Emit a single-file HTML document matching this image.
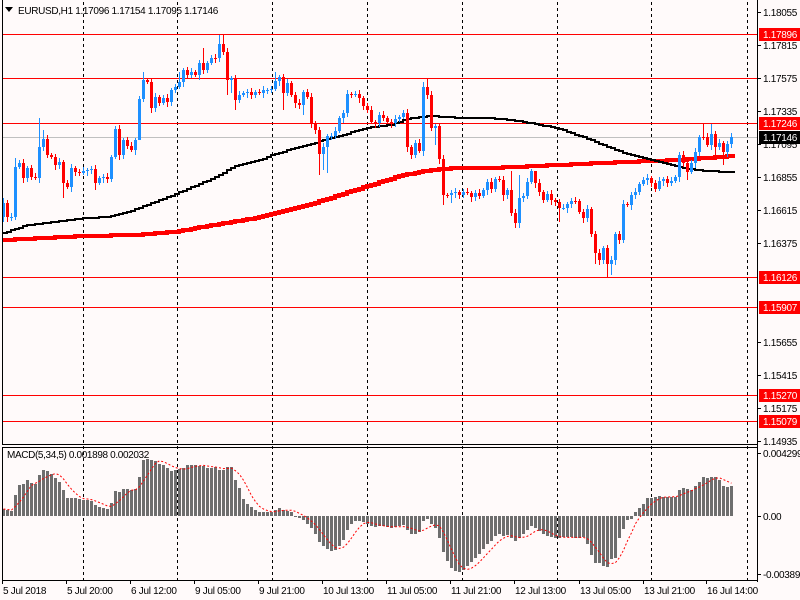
<!DOCTYPE html>
<html><head><meta charset="utf-8"><style>
html,body{margin:0;padding:0;background:#fffafa;}
svg{display:block;}
text{font-family:"Liberation Sans",sans-serif;font-size:10px;fill:#000;letter-spacing:-0.3px;}
</style></head><body>
<svg id="s" width="800" height="600" xmlns="http://www.w3.org/2000/svg">
<rect width="800" height="600" fill="#fffafa"/>
<g id="grid" stroke="#000" stroke-width="1" stroke-dasharray="3,3">
<line x1="83.5" y1="2" x2="83.5" y2="580"/><line x1="177.5" y1="2" x2="177.5" y2="580"/>
<line x1="272.5" y1="2" x2="272.5" y2="580"/><line x1="367.5" y1="2" x2="367.5" y2="580"/>
<line x1="462.5" y1="2" x2="462.5" y2="580"/><line x1="557.5" y1="2" x2="557.5" y2="580"/>
<line x1="651.5" y1="2" x2="651.5" y2="580"/><line x1="747.5" y1="2" x2="747.5" y2="580"/>
</g>
<g stroke="#ff0000" stroke-width="1">
<line x1="2" y1="34.5" x2="757" y2="34.5"/><line x1="2" y1="78.5" x2="757" y2="78.5"/>
<line x1="2" y1="123.5" x2="757" y2="123.5"/><line x1="2" y1="277.5" x2="757" y2="277.5"/>
<line x1="2" y1="307.5" x2="757" y2="307.5"/><line x1="2" y1="395.5" x2="757" y2="395.5"/>
<line x1="2" y1="421.5" x2="757" y2="421.5"/>
</g>
<line x1="2" y1="137.5" x2="757" y2="137.5" stroke="#c0c0c0"/>
<g id="dyn"></g>
<g stroke="#000" fill="none">
<line x1="2.5" y1="0" x2="2.5" y2="444"/><line x1="757.5" y1="0" x2="757.5" y2="582"/>
<line x1="2" y1="444.5" x2="757" y2="444.5"/><line x1="2" y1="447.5" x2="757" y2="447.5"/>
<line x1="2.5" y1="447" x2="2.5" y2="580"/><line x1="2" y1="580.5" x2="757" y2="580.5"/>
</g>
<path d="M5 7 L13 7 L9 12 Z" fill="#000"/>
<text x="18" y="14" textLength="200">EURUSD,H1  1.17096 1.17154 1.17095 1.17146</text>
<text x="7" y="458" textLength="142">MACD(5,34,5) 0.001898 0.002032</text>
<g id="ax"></g>
</svg>
<script>
(function(){
var C=[203,217,217,167,163,178,168,177,178,147,139,155,157,165,162,183,187,168,172,173,171,170,169,183,178,177,179,157,129,155,140,146,150,140,99,80,82,108,97,103,98,102,90,87,82,70,75,72,75,63,70,63,58,58,44,52,80,78,100,95,93,92,95,92,93,90,90,89,81,77,93,83,95,103,105,92,97,123,130,154,147,136,136,131,118,113,94,95,94,98,106,110,122,123,115,118,122,123,119,117,113,147,155,143,151,87,95,128,126,159,195,195,193,192,195,192,193,197,193,196,190,182,189,179,180,195,190,213,223,198,196,182,171,183,192,200,194,200,202,208,208,204,201,201,212,218,209,234,253,260,248,264,260,234,240,204,205,195,192,184,180,178,183,189,181,179,183,181,177,155,163,172,163,152,137,137,145,134,147,143,152,144,137];
var OV={0:[198,222],3:[158,null],9:[118,null],10:[130,null],15:[null,198],23:[null,190],34:[null,118],35:[72,null],44:[72,null],50:[48,null],54:[35,null],55:[35,null],56:[null,95],57:[null,93],58:[null,110],68:[72,null],70:[null,110],75:[null,115],79:[null,175],80:[null,170],81:[null,173],105:[82,null],106:[79,null],108:[null,145],110:[null,205],112:[null,203],125:[null,201],127:[171,null],128:[null,228],129:[175,null],133:[175,null],139:[null,222],148:[null,264],151:[null,277],152:[null,275],171:[null,180],175:[124,null],177:[124,null],178:[null,160],180:[null,165]};
var H=[7,6,5,21,31,32,36,33,32,41,46,45,42,38,34,26,18,18,18,17,16,16,15,11,9,8,7,13,25,24,27,27,26,27,39,56,57,56,55,52,51,48,45,46,47,48,51,51,51,50,50,48,48,49,46,46,49,49,36,28,17,12,9,6,4,4,4,4,6,8,6,5,4,0,-2,
-4,-8,-12,-18,-26,-30,-33,-35,-34,-30,-24,-14,-8,-5,-5,-6,-8,-10,-11,-10,-10,-11,-12,-11,-10,-9,-14,-18,-18,-16,-5,-3,-8,-12,-22,-36,-45,-52,-55,-56,-54,-50,-46,-42,-38,-33,-28,-25,-20,-18,-20,-19,-22,-25,-22,-18,-14,-10,-12,-15,-18,-20,-21,
-22,-22,-21,-21,-21,-22,-22,-21,-28,-39,-47,-47,-50,-51,-43,-42,-22,-13,-4,-3,
4,8,12,18,18,19,20,19,19,19,19,26,28,27,26,30,34,39,38,39,39,36,30,29,30];
var s='';
function interp(pts,x){for(var k=0;k<pts.length-1;k++){if(x<=pts[k+1][0]){var a=pts[k],b=pts[k+1];return a[1]+(b[1]-a[1])*(x-a[0])/(b[0]-a[0]);}}return pts[pts.length-1][1];}
var BK=[[3,233],[27,225],[83,218],[107,217],[133,210],[173,195],[213,178],[233,167],[260,160],[271,155],[317,142],[367,128],[390,125],[410,118],[430,116],[463,118],[490,118],[510,120],[530,123],[560,129],[590,140],[623,153],[650,160],[677,167],[703,171],[732,172]];
var RD=[[3,240],[83,236],[133,235],[173,232],[213,225],[260,217],[271,214],[317,202],[367,186],[403,175],[430,170],[457,168],[490,168],[557,165],[623,162],[677,160],[732,156]];
function stepLine(pts,col,w){var d='';for(var x=3;x<=733;x+=4){var y=Math.round(interp(pts,x));d+=(x==3?'M':'L')+x+' '+y+' L'+(x+4)+' '+y+' ';}return '<path d="'+d+'" stroke="'+col+'" stroke-width="'+w+'" fill="none"/>';}
s+=stepLine(RD,'#ff0000',4);
s+=stepLine(BK,'#000',2);
for(var i=0;i<C.length;i++){
 var o=i?C[i-1]:217,c=C[i];var tp=Math.min(o,c),bt=Math.max(o,c);
 var up=c<o||(c==o&&i%2==0);var col=up?'#1e90ff':'#ff0000';
 var hi=tp-2-(i%3),lo=bt+2+((i*7)%4);
 if(OV[i]){if(OV[i][0]!=null)hi=OV[i][0];if(OV[i][1]!=null)lo=OV[i][1];}
 var x=2+4*i;
 s+='<rect x="'+(x+1)+'" y="'+hi+'" width="1" height="'+(lo-hi)+'" fill="'+col+'"/>';
 s+='<rect x="'+x+'" y="'+tp+'" width="3" height="'+Math.max(1,bt-tp)+'" fill="'+col+'"/>';
}
for(var i=0;i<H.length;i++){var h=H[i];var x=2+4*i;
 if(h>=0)s+='<rect x="'+x+'" y="'+(516-h)+'" width="3" height="'+Math.max(1,h)+'" fill="#6e6e6e"/>';
 else s+='<rect x="'+x+'" y="516" width="3" height="'+(-h)+'" fill="#6e6e6e"/>';}
var d='';for(var i=0;i<H.length;i++){var a=0,n=0;for(var k=Math.max(0,i-4);k<=i;k++){a+=H[k];n++;}d+=(i?'L':'M')+(3.5+4*i)+' '+(516-a/n).toFixed(1)+' ';}
s+='<path d="'+d+'" stroke="#ff0000" stroke-width="1" fill="none" stroke-dasharray="2,2"/>';
document.getElementById('dyn').innerHTML=s;
var a='';
var L=[["1.18055",12],["1.17815",45],["1.17575",78],["1.17335",111],["1.17095",144],["1.16855",177],["1.16615",210],["1.16375",243],["1.15655",342],["1.15415",375],["1.15175",408],["1.14935",441]];
L.forEach(function(l){a+='<line x1="757" y1="'+(l[1]+.5)+'" x2="761" y2="'+(l[1]+.5)+'" stroke="#000"/><text x="763" y="'+(l[1]+4)+'">'+l[0]+'</text>';});
var R=[["1.17896",34,'#ff0000'],["1.17246",123,'#ff0000'],["1.17146",137,'#000'],["1.16126",277,'#ff0000'],["1.15907",307,'#ff0000'],["1.15270",395,'#ff0000'],["1.15079",421,'#ff0000']];
R.forEach(function(l){a+='<rect x="759" y="'+(l[1]-6)+'" width="41" height="13" fill="'+l[2]+'"/><text x="763" y="'+(l[1]+4)+'" style="fill:#fff">'+l[0]+'</text>';});
[["0.004299",453],["0.00",516],["-0.003896",574]].forEach(function(l){a+='<line x1="757" y1="'+(l[1]+.5)+'" x2="761" y2="'+(l[1]+.5)+'" stroke="#000"/><text x="763" y="'+(l[1]+4)+'">'+l[0]+'</text>';});
var T=[["5 Jul 2018",2],["5 Jul 20:00",66],["6 Jul 12:00",130],["9 Jul 05:00",194],["9 Jul 21:00",258],["10 Jul 13:00",322],["11 Jul 05:00",386],["11 Jul 21:00",450],["12 Jul 13:00",514],["13 Jul 05:00",579],["13 Jul 21:00",643],["16 Jul 14:00",706]];
T.forEach(function(t){a+='<line x1="'+(t[1]+.5)+'" y1="580" x2="'+(t[1]+.5)+'" y2="584" stroke="#000"/><text x="'+(t[1]+1)+'" y="594">'+t[0]+'</text>';});
document.getElementById('ax').innerHTML=a;
})();
</script>
</body></html>
